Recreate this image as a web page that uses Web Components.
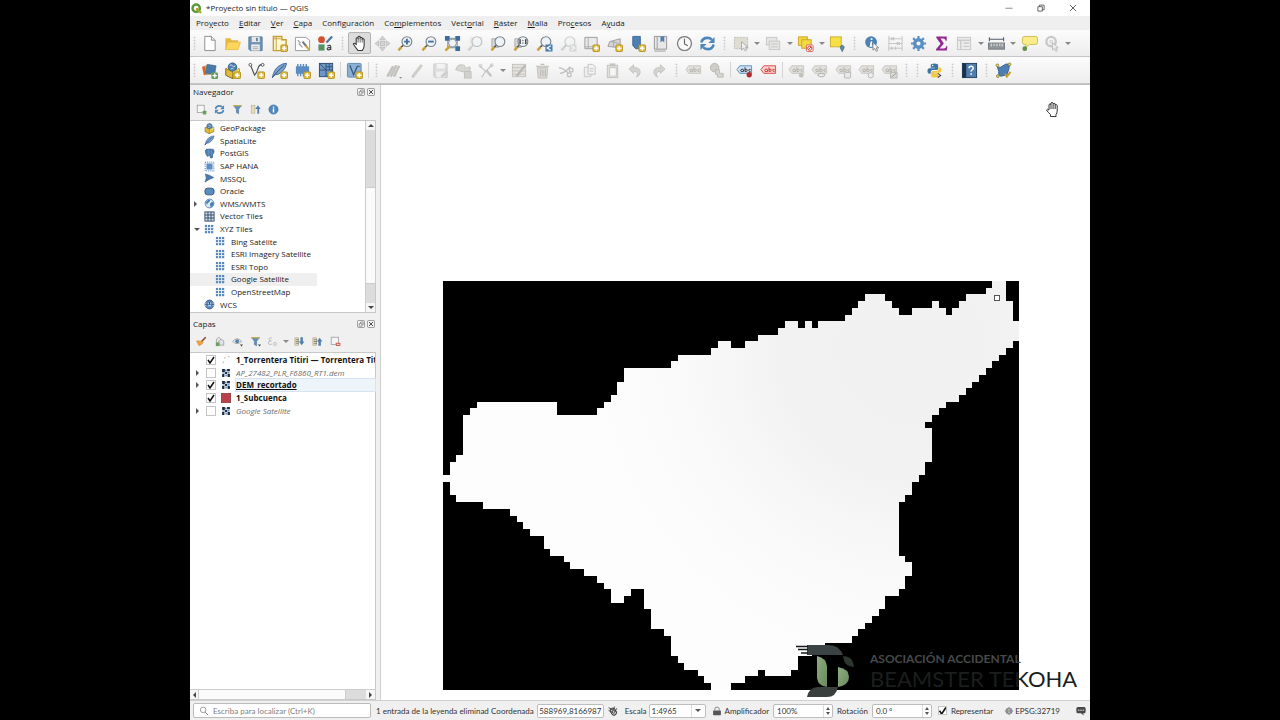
<!DOCTYPE html>
<html lang="es">
<head>
<meta charset="utf-8">
<title>*Proyecto sin título — QGIS</title>
<style>
  html, body { margin: 0; height: 100%; background: #000; }
  body { font: 8px/12px "Open Sans", sans-serif; color: #1a1a1a; overflow: hidden; }
</style>
</head>
<body>
<qgis-window></qgis-window>

<script>
/* ---------- icon set, drawn on an 18 x 18 grid ---------- */
const NEW = '<rect x="10.5" y="10.5" width="7" height="7" rx="1" fill="#e3bd3a" stroke="#b3922a"/><path d="M14 11.6v4.8M11.6 14h4.8" stroke="#fff" stroke-width="1.6"/>';
const PLUS = '<rect x="11" y="11" width="7" height="7" rx="1" fill="#6a9e5c"/><path d="M14.5 12.200v4.600M12.200 14.500h4.600" stroke="#fff" stroke-width="1.400"/>';
const LENS = '<circle cx="10.500" cy="7" r="5.200" fill="#eef3f7" stroke="#7d8286" stroke-width="1.200"/><path d="M6.500 11l-2.300 2.300" stroke="#555" stroke-width="1.600"/><path d="M4.600 12.800L1.500 16.200" stroke="#c9a035" stroke-width="2.600"/>';
const GRID = (n, c, gap) => { let s = ''; const w = 15 / n; for (let i = 0; i < n; i++) for (let j = 0; j < n; j++) s += `<rect x="${1.5 + i * w}" y="${1.5 + j * w}" width="${w - gap}" height="${w - gap}" fill="${c}"/>`; return s; };
const TAG = (f, s, t) => `<path d="M1 8l3-4h12.500v8H4z" fill="${f}" stroke="${s}"/><path d="M5 9.500q0-2 1.500-2t1.500 1v1.500q-2 .800-3-.500M9.500 5.500V10q2.500.500 2.500-1.300T9.500 8M15.500 8q-2-1-2 .800t2 1" fill="none" stroke="${t}" stroke-width="1"/>`;
const GTAG = TAG('#e2e0da', '#c8c6c0', '#b2b0ab');
const FUNNEL = '<path d="M2.500 2.500h13L10.800 8.500v7.500l-3.600-2V8.500z" fill="#5d8fc0" stroke="#51749a"/><path d="M2 1.800h14v2H2z" fill="#d0b04a"/>';
const CHECKER = '<rect x="2" y="2" width="14" height="14" fill="#dfe9f2"/><path d="M2 2h5v5H2zM11 2h5v4h-5zM7 7h4v4H7zM2 11h4v5H2zM12 11h4v5h-4z" fill="#1d2b40"/><path d="M7 3h3v3H7zM3 8h3v2H3zM12 7h3v3h-3zM8 12h3v3H8z" fill="#5f8db5"/>';
const I = {
  logo: '<circle cx="8.500" cy="8.500" r="6" fill="none" stroke="#5c9a36" stroke-width="4"/><path d="M9 9l7.500 7.500" stroke="#93b023" stroke-width="3.600"/><path d="M9 9l2 2" stroke="#ee7913" stroke-width="3"/>',
  file: '<path d="M4 1.500h7l4 4v11H4z" fill="#fff" stroke="#8a8a8a"/><path d="M11 1.500v4h4" fill="#eee" stroke="#8a8a8a"/>',
  open: '<path d="M1.500 15V3.500h5l2 2h6.500V15z" fill="#e3b944"/><path d="M1.500 15.500L4 7.500h13.500L15 15.500z" fill="#fbd65b" stroke="#e0ac3a" stroke-width=".6"/>',
  save: '<path d="M2 2h14v14.500H3.500L2 15z" fill="#6e94b8" stroke="#587892"/><rect x="5" y="2" width="8.500" height="5.500" fill="#e8e8e8"/><rect x="9.500" y="3" width="2" height="3.500" fill="#68829b"/><rect x="4.500" y="10" width="9" height="6.500" fill="#eee"/><path d="M6 12.500h6M6 14.500h6" stroke="#999" stroke-width=".8"/>',
  layout: '<path d="M2.500 1.500h9V5H16v11.500H2.500z" fill="#fff8d8" stroke="#c69e36" stroke-width="1.500"/><path d="M2.500 4h8M5.500 1.500v15" stroke="#c69e36"/>' + NEW,
  manager: '<path d="M1.500 2.500h11l4 3v11h-15z" fill="#fff" stroke="#999"/><path d="M4 5.500l3 3M5 9l4 4" stroke="#999" stroke-width="1.200"/><path d="M9 7l5 6" stroke="#777" stroke-width="2.200"/><path d="M12.500 11.500l3.500 4" stroke="#d2ab3e" stroke-width="2.200"/>',
  style: '<circle cx="4.800" cy="5" r="3.600" fill="#d0502f"/><path d="M10 8l6-6.500" stroke="#51779d" stroke-width="2.400"/><rect x="1.500" y="10" width="6.500" height="6.500" fill="#569163"/><path d="M11 11.500q3.500-1.500 3.500 1V16M14.500 13q-4 0-3.700 1.800T14.500 15" fill="none" stroke="#444" stroke-width="1.300"/>',
  hand: '<path d="M5.500 10V3.500q1-1.400 2 0V2q1.200-1.300 2.200 0v1q1.200-1 2.200.200v1q1.200-.800 2 .500V11q0 3-2 5.500H7.500Q5 13.500 2.500 9.500q.5-1.700 3 .5z" fill="#fff" stroke="#333" stroke-width="1.100"/><path d="M7.500 3.500V8M9.700 3v5M11.900 4v4" stroke="#333" stroke-width=".8"/>',
  pansel: '<g fill="#d3d3d3" stroke="#b4b4b4" stroke-width=".7"><path d="M9 1l3 4H6zM9 17l3-4H6zM1 9l4-3v6zM17 9l-4-3v6z"/><rect x="6.500" y="6.500" width="5" height="5"/></g>',
  zoomin: LENS + '<path d="M7.500 7h6M10.500 4v6" stroke="#456f9f" stroke-width="2"/>',
  zoomout: LENS + '<path d="M7.500 7h6" stroke="#456f9f" stroke-width="2"/>',
  zoomfull: '<path d="M4 3.500h10v10H4z" fill="none" stroke="#6f8fae" stroke-width="1"/><g fill="#3d6c9c"><path d="M1 1h5v5H1zM12 1h5v5h-5zM12 12h5v5h-5z"/></g><circle cx="9" cy="8.500" r="4.200" fill="#eef3f7" stroke="#84898d"/><path d="M6 12l-4.500 4.500" stroke="#c9a035" stroke-width="2.600"/>',
  zoomsel: '<g opacity=".45"><rect x="3" y="2" width="13" height="8" fill="#dcd9cc"/>' + LENS.replace('#c9a035', '#aaa').replace('#555', '#999') + '</g>',
  zoomlayer: '<path d="M2 4h7v9H2z" fill="#d8d8d8" stroke="#aaa"/>' + LENS,
  zoomnative: '<path d="M2 4h7v9H2z" fill="#d8d8d8" stroke="#aaa"/>' + LENS + '<path d="M7.500 4.500v5M13.500 4.500v5" stroke="#333" stroke-width="1.400"/><path d="M10.500 5.500v.900M10.500 8v.900" stroke="#333" stroke-width="1.300"/>',
  zoomlast: LENS + '<rect x="10" y="10" width="7.500" height="7.500" fill="#4f7eae"/><path d="M15.500 11.500l-3.500 2.300 3.500 2.300" fill="none" stroke="#fff" stroke-width="1.300"/>',
  zoomnext: '<g opacity=".35">' + LENS.replace('#c9a035', '#999') + '<rect x="10" y="10" width="7.500" height="7.500" fill="#aaa"/><path d="M12 11.500l3.500 2.300-3.500 2.300" fill="none" stroke="#fff" stroke-width="1.300"/></g>',
  newmap: '<path d="M2 2.500h13v12H2z" fill="#eaeaea" stroke="#9b9b9b"/><path d="M5.500 2.500v12M2 12.500h9" stroke="#aaa"/>' + NEW,
  new3d: '<path d="M2 12l2-5 11-3v8l-5 1z" fill="#d5d5d5" stroke="#9c9c9c"/><path d="M5 7l9 2M8 6v7" stroke="#aaa"/>' + NEW,
  bookmark: '<path d="M4 1.500h8v13H7l-3-3.500z" fill="#4e7fb1" stroke="#3f6c9a"/>' + NEW,
  bookmarks: '<path d="M2.500 1.500h13v13.500h-13z" fill="#e8e8e8" stroke="#949494"/><path d="M5.500 1.500v13.500M2.500 17h12" stroke="#999"/><path d="M9 1.500h4V8l-2-2-2 2z" fill="#4e7fb1"/>',
  clock: '<circle cx="9" cy="9" r="7.400" fill="#f8f8f8" stroke="#777" stroke-width="1.300"/><path d="M9 4v5.500l3.500 2" fill="none" stroke="#666" stroke-width="1.200"/>',
  refresh: '<path d="M2.500 8Q3.500 3 9 3q3 0 4.500 2" fill="none" stroke="#4d86b9" stroke-width="2.800"/><path d="M16.500 2v6.500H10z" fill="#4d86b9"/><path d="M15.500 10Q14.500 15 9 15q-3 0-4.500-2" fill="none" stroke="#4d86b9" stroke-width="2.800"/><path d="M1.500 16V9.500H8z" fill="#4d86b9"/>',
  select: '<rect x="1.500" y="2.500" width="14" height="12" fill="#dfddd2" stroke="#bdbdb8" stroke-dasharray="2 1"/><path d="M9 7v9l2.300-2 1.700 3 1.500-1-1.500-3h3z" fill="#eee" stroke="#aaa"/>',
  select2: '<rect x="1.500" y="2.500" width="11" height="8" fill="#e6e6e2" stroke="#c6c6c6"/><rect x="4.500" y="6.500" width="11" height="9" fill="#e6e6e2" stroke="#c6c6c6"/><path d="M6.500 9.500h7M6.500 12.500h7" stroke="#c6c6c6"/>',
  deselect: '<rect x="1.500" y="2" width="9.500" height="9" fill="#f2d944" stroke="#c9a628"/><rect x="5" y="5" width="10" height="9" fill="#f2d944" stroke="#c9a628"/><rect x="10" y="10.500" width="7" height="7" rx="1" fill="#fff" stroke="#d3645b"/><circle cx="13.500" cy="14" r="2.200" fill="none" stroke="#cc3c32"/><path d="M12 15.500l3-3" stroke="#cc3c32"/>',
  selloc: '<rect x="1.500" y="2" width="11.500" height="10.500" fill="#f7e046" stroke="#cbae31"/><path d="M14 17.500l-2-4q0-2.500 2-2.500t2 2.500z" fill="#628a9f" stroke="#50778b"/>',
  identify: '<circle cx="7.500" cy="7.500" r="6.300" fill="#4b82b6"/><path d="M8 3.500v1.800M8 6.800L7 11.500h2" stroke="#fff" stroke-width="1.800" fill="none"/><path d="M9.500 8v8l2-1.700 1.600 3 1.400-.800-1.500-2.900h2.600z" fill="#fff" stroke="#777" stroke-width=".9"/>',
  abacus: '<g fill="none" stroke="#c2c2c2"><path d="M2 1v16M16 1v16M2 4h14M2 9h14M2 14h14"/><path d="M5 2.500v3M7 2.500v3M11 7.500v3M13 7.500v3M5 12.500v3M9 12.500v3" stroke-width="1.400"/></g>',
  gear: '<circle cx="9" cy="9" r="4" fill="none" stroke="#5a8fc3" stroke-width="3.600"/><path d="M9 1v3M9 14v3M1 9h3M14 9h3M3.300 3.300l2.200 2.200M12.500 12.500l2.200 2.200M3.300 14.700l2.200-2.200M12.500 5.500l2.200-2.200" stroke="#5a8fc3" stroke-width="2.300"/>',
  sigma: '<path d="M3.500 1.500h11V6h-1.200q-.3-2.300-2.500-2.300H8L11.500 9 7 14.200h4.500q2.200 0 2.600-2.400h1.200l-.7 4.700H3.200v-1.300L8 9.300 3.500 2.800z" fill="#93298f"/>',
  table: '<rect x="1.500" y="2.500" width="14" height="13" fill="#ececec" stroke="#c6c6c6"/><path d="M1.500 5.500h14M5 6v9M8 8.500h6M8 12h6" stroke="#cbcbcb" stroke-width="1.500"/>',
  ruler: '<path d="M1 4.500h16M1.500 2.500v4M16.500 2.500v4" stroke="#4f6070" stroke-width="1.200"/><rect x=".500" y="8.500" width="17" height="6.500" fill="#90979c" stroke="#757b80"/><path d="M3.500 9v3M6.500 9v2.500M9.500 9v3M12.500 9v2.500M15 9v3" stroke="#e8e8e8" stroke-width="1"/>',
  note: '<path d="M4 1.500h11q2.500 0 2.500 2V8q0 2-2.500 2H9l-5 4.500 1.500-4.500H4Q1.500 10 1.500 8V3.500q0-2 2.500-2z" fill="#faec8c" stroke="#cdbc54"/><circle cx="4" cy="14.500" r="2.500" fill="#628d4b"/>',
  lens2: '<g stroke="#c8c8c8" fill="none"><circle cx="7.500" cy="7" r="5" stroke-width="2.500"/><circle cx="7.500" cy="7" r="1.500"/></g><path d="M9 8v8l2-1.700 1.600 3 1.400-.800-1.500-2.900h2.600z" fill="#eee" stroke="#bbb"/>',
  source: '<path d="M1 5l8-2 2 9-8 2z" fill="#cf6a32"/><path d="M4 4l9-1 1 9-8 2z" fill="#dba93c"/><path d="M6.500 2.500l9.500 1.500-1.500 9.500L5 12z" fill="#477aa9" stroke="#3b688f" stroke-width=".6"/>' + PLUS,
  gpkg: '<path d="M2 7l7 3.500L16 7v7l-7 3.500L2 14z" fill="#e7c53d" stroke="#6f6228"/><circle cx="9" cy="5.500" r="4.500" fill="#4c7fb0" stroke="#375d82"/><path d="M6 4q2-2 3 0t3 0M7 7.500q2-1.500 3 0" stroke="#d8e6f1" fill="none"/><path d="M2 7l7 3.500 7-3.500v3l-7 3-7-3z" fill="#f2d95c"/><path d="M2 7l7 3.500V17.500L2 14z" fill="#e0bb35" stroke="#6f6228" stroke-width=".6"/>',
  vector: '<path d="M2.500 3l4.500 11q2-2 3.500-7t5-4" fill="none" stroke="#4a4f55" stroke-width="1.200"/><circle cx="2.500" cy="3" r="1.500" fill="#fff" stroke="#555"/><circle cx="15.500" cy="3" r="1.500" fill="#fff" stroke="#555"/>' + NEW,
  feather: '<path d="M1.500 16.500Q3 8 8 4.500t8.500-3Q16 6 12 10t-8 3.500z" fill="#7ba3cb" stroke="#41699a"/><path d="M1.500 16.500Q7 9 14 3.500" stroke="#2f527c" fill="none"/>',
  memory: '<rect x="2" y="4.500" width="14" height="8" fill="#5a8cc0"/><path d="M4 2v13M7 2v13M10 2v13M13 2v13" stroke="#5a8cc0" stroke-width="1.500"/>' + NEW,
  mesh: '<rect x="1.500" y="1.500" width="14" height="14" fill="#6c97c4" stroke="#2f4e70"/><path d="M1.500 8.500h14M8.500 1.500v14M1.500 1.500l7 7M8.500 15.500l7-7M8.500 5h7M12 1.500v7" stroke="#2f4e70" stroke-width=".9"/>' + NEW,
  virtual: '<rect x="1.500" y="1.500" width="14.500" height="14.500" rx="1" fill="#8bb0d5" stroke="#5f8ab4"/><path d="M4 3.500l4 10 4-9h2.500" fill="none" stroke="#33557b" stroke-width="1.300"/>' + NEW,
  pencils: '<g stroke="#c4c2bd" stroke-width="2.600"><path d="M2.500 15.500L8.500 4.500M6 15.500L12 3.500M9.500 15.500L15 4"/></g><path d="M15 16h3l-1.500 1.800z" fill="#888"/>',
  pencil: '<path d="M4 15.500L13.500 3" stroke="#d0cec9" stroke-width="3.200"/><path d="M3 17l1-3 2 1.500z" fill="#bbb"/>',
  savegray: '<g opacity=".4"><path d="M2 2h14v14.500H3.500L2 15z" fill="#bbb" stroke="#888"/><rect x="5" y="2" width="8.500" height="5" fill="#eee"/><rect x="4.500" y="10" width="9" height="6.500" fill="#eee"/><path d="M10 16l6-6" stroke="#999" stroke-width="3"/></g>',
  addfeat: '<path d="M1.500 8q0-5 5-5t4 2.500 5-.500q2 2-.5 4.500T5 9.500t-3.500-1.500z" fill="#d9d7d2" stroke="#c6c4bf"/><rect x="10" y="10" width="7" height="7" fill="#d3d1cb" stroke="#c0c0c0"/>',
  vertex: '<g fill="none" stroke="#c2c2c2"><path d="M2 4l6 6L15 3M8 10l-4 6" stroke-width="1.200"/><circle cx="2.500" cy="4" r="1.500"/><circle cx="14.500" cy="3.500" r="1.500"/></g><path d="M9 9l5 6" stroke="#c4c4c4" stroke-width="2.600"/>',
  attrs: '<rect x="1.500" y="2.500" width="14" height="13" fill="#e4e2dc" stroke="#c4c2bc"/><path d="M2 6h13M2 9.500h13M2 13h13" stroke="#c4c2bc"/><path d="M6 15L15 3.500" stroke="#b8b6b0" stroke-width="2.200"/>',
  trash: '<path d="M3.500 6h11l-1 11h-9z" fill="#dcdad4" stroke="#bebcb6"/><path d="M2 4.500h14M7 2.500h4M7 8v7M9.500 8v7M12 8v7" stroke="#bebcb6" stroke-width="1.300"/>',
  cut: '<g fill="none" stroke="#c0c0c0" stroke-width="1.400"><path d="M2 6q6 1 10 6M3 12q5 0 11-7"/><circle cx="13" cy="13.500" r="2"/><circle cx="15" cy="8.500" r="2"/></g>',
  copy: '<path d="M3.500 5.500h7v10h-7z" fill="#eee" stroke="#c8c8c8"/><path d="M7.500 2.500h5l2.500 2.500v8H7.500z" fill="#f3f3f3" stroke="#c2c2c2"/><path d="M9 7h4M9 9.500h4" stroke="#c4c4c4"/>',
  paste: '<rect x="3.500" y="3.500" width="11" height="13" fill="#e3e1dc" stroke="#c0c0c0"/><rect x="6" y="1.500" width="6" height="3" fill="#c4c4c4"/><rect x="6" y="6" width="7" height="9" fill="#f6f6f6" stroke="#c8c8c8"/>',
  undo: '<path d="M2 7.500L7 3v2.800q7-.3 7 5.200 0 3-4 5 1.500-2 1-4-.7-2.200-4-2.200V12z" fill="#d5d3cf" stroke="#bdbdbd" stroke-width=".8"/>',
  redo: '<path d="M16 7.500L11 3v2.800q-7-.3-7 5.200 0 3 4 5-1.500-2-1-4 .7-2.200 4-2.200V12z" fill="#d5d3cf" stroke="#bdbdbd" stroke-width=".8"/>',
  tag: GTAG,
  diagram: '<circle cx="7" cy="6" r="4.500" fill="#cfcdc8" stroke="#b9b7b1"/><path d="M8 8h4v4h4v4h-6v-3H8z" fill="#d9d7d2" stroke="#b9b7b1"/>',
  tagpin: TAG('#cfe1f3', '#5b8fc5', '#333') + '<circle cx="14" cy="13.500" r="2.800" fill="#b3282c"/>',
  tagred: TAG('#fbd3d1', '#dd4842', '#c8322c'),
  tag1: GTAG + '<circle cx="14" cy="14" r="2.500" fill="#c2c0bb"/>',
  tag2: GTAG + '<path d="M7 14q4-4 8 0-4 3.500-8 0z" fill="#eee" stroke="#aaa"/>',
  tag3: GTAG + '<rect x="10" y="11" width="6.500" height="6" rx="1" fill="#e8e8e8" stroke="#b5b5b5"/>',
  tag4: GTAG + '<circle cx="13.500" cy="14" r="2.800" fill="#eee" stroke="#b5b5b5"/>',
  tag5: GTAG + '<path d="M10 11h7v6h-7z" fill="#dcdad4" stroke="#b5b5b5"/><path d="M11 16l5-4" stroke="#999"/>',
  python: '<path d="M9 1.500q-4 0-4 2V6h4.500v.700H3.500Q1.500 7 1.500 9.500t2 3H5v-2q0-2 2-2h4q1.800 0 1.800-1.700V3.500q0-2-3.800-2z" fill="#3b74a6"/><path d="M9 16.500q4 0 4-2V12H8.500v-.700h6q2-.3 2-2.800t-2-3h-1.300v2q0 2-2 2h-4q-1.800 0-1.800 1.700v3.300q0 2 3.600 2z" fill="#f0c940"/><circle cx="7" cy="3.800" r=".8" fill="#fff"/><path d="M12.500 12l3 2.200-3 2.200" stroke="#444" fill="none" stroke-width="1.200"/>',
  help: '<rect x="1.500" y="1.500" width="15" height="15" fill="#4e7dae" stroke="#26415e"/><rect x="1.500" y="1.500" width="4" height="15" fill="#1c3047"/><path d="M8.500 6.500q0-2 2.200-2t2.200 2q0 1.200-1.200 2t-1 1.800M10.700 12v1.800" fill="none" stroke="#fff" stroke-width="1.500"/>',
  topo: '<path d="M2.500 5q3 2 6-1t7-1.500L14.500 8l-2 5.500-6.500 1.500q-3-1-2-5z" fill="#4e7fb2" stroke="#345d88"/><g fill="#e8d98c" stroke="#8a8333"><circle cx="2.500" cy="3.500" r="1.400"/><circle cx="15.500" cy="2.500" r="1.400"/><circle cx="3" cy="15" r="1.400"/></g><path d="M10.500 12.500l2 3 4-5" fill="none" stroke="#c99a2c" stroke-width="2"/>',
  addsel: '<rect x="2" y="2" width="11.500" height="12" fill="#f6f6f6" stroke="#9c9c9c" stroke-width="1.300"/><rect x="11" y="11" width="6" height="6" rx="1" fill="#6d9f60"/>',
  funnel: FUNNEL,
  collapse: '<rect x="2" y="2" width="6" height="13" fill="#e6ddbf" stroke="#b7ab85"/><path d="M12 16V8H8.500L13 2l4.500 6H15v8z" fill="#4d7fb3"/>',
  info: '<circle cx="9" cy="9" r="7.500" fill="#5087bd" stroke="#3c6c9d"/><path d="M9 4v2M9 7.500V14" stroke="#fff" stroke-width="2.400"/>',
  brush: '<path d="M9 9l7-7" stroke="#8a4b26" stroke-width="2.600"/><path d="M1 8l8 .500 3 2Q9 14 5 16z" fill="#f0a53c" stroke="#d27f2a"/>',
  group: '<path d="M4 14V5l4-3 3 3v9z" fill="#e7e7e7" stroke="#888"/><path d="M8 15V8l4-3 4 3v7z" fill="#dfe3e6" stroke="#888"/><rect x="3" y="10.500" width="6" height="6" fill="#6d9f60"/>',
  eye: '<path d="M1 9q7-9 15 0-8 7-15 0z" fill="#e4e9ee" stroke="#888"/><circle cx="8.500" cy="8.500" r="3.200" fill="#5c83aa"/><path d="M13 14h5l-2.500 3z" fill="#444"/>',
  funnel2: FUNNEL + '<path d="M13 14h5l-2.500 3z" fill="#444"/>',
  expr: '<g fill="none" stroke="#bbb" stroke-width="1.500"><path d="M8 3.500Q3 2 3 5t4 3Q2 8 2 11.500t6 2"/><circle cx="13" cy="13" r="2.500"/></g>',
  expand: '<rect x="1.500" y="3" width="6" height="12" fill="#e6ddbf" stroke="#aa9f7c"/><path d="M3 6h5M3 9h5M3 12h5" stroke="#555"/><path d="M10.500 2v7H8l4.500 6L17 9h-2.500V2z" fill="#4d7fb3"/>',
  collapse2: '<rect x="1.500" y="3" width="6" height="12" fill="#e6ddbf" stroke="#aa9f7c"/><path d="M3 6h5M3 9h5M3 12h5" stroke="#555"/><path d="M10.500 16V9H8l4.500-6L17 9h-2.500v7z" fill="#4d7fb3"/>',
  remove: '<rect x="2" y="2" width="12" height="12" fill="#f4f4f4" stroke="#9c9c9c" stroke-width="1.300"/><rect x="9.500" y="11" width="7.500" height="5.500" rx="1" fill="#d4625a"/><path d="M11 13.700h4.500" stroke="#fff" stroke-width="1.300"/>',
  pg: '<path d="M2 4q2-3 5-2 3-1 5 0 4-1 4.500 3 0 4-2.500 6v4.500q-2 2-4 0V12H8q-1 3-3 1-3-4-3-9z" fill="#4f80b3" stroke="#33597f"/><path d="M7 3q2 4 0 8M12 4v6" stroke="#7fa5c9" fill="none"/>',
  hana: '<rect x="4" y="4" width="10" height="10" fill="#5e8fc1"/><rect x="2" y="2" width="14" height="14" fill="none" stroke="#6a98c6" stroke-width="2" stroke-dasharray="1.500 1.500"/>',
  mssql: '<path d="M2 1.500q8 2 14 6Q8 10 1.500 15q4-7 .5-13.500z" fill="#4a7aad" stroke="#38618c"/>',
  oracle: '<rect x="1.500" y="3.500" width="15" height="11" rx="4.500" fill="#5b8cc0" stroke="#2b4a6b" stroke-width="1.400"/>',
  globe: '<circle cx="9" cy="9" r="7.200" fill="#dfeaf5" stroke="#3f6fa0" stroke-width="1.300"/><path d="M3 7q3-5 6-4t-1 4-3 5zM10 9q4-4 6-1-1 6-5 7-2-3-1-6z" fill="#4b7fb4"/>',
  wcs: '<circle cx="9" cy="9" r="7.200" fill="#5788bb" stroke="#2f557e" stroke-width="1.300"/><path d="M2 7h14M2 11h14" stroke="#dfe9f3" stroke-width="1.400"/><path d="M5 6v6M9 5v4M13 6v6" stroke="#27486b" stroke-width="1.500"/>',
  vtiles: '<rect x="1.500" y="1.500" width="15" height="15" fill="#d6e2ee" stroke="#2c4765" stroke-width="1.500"/><path d="M6.500 1.500v15M11.500 1.500v15M1.500 6.500h15M1.500 11.500h15" stroke="#2c4765" stroke-width="1.500"/>',
  xyz: GRID(3, '#5688bd', 1.400) + '<path d="M1 6h16M1 11h16" stroke="#c6d7e8" stroke-width=".6"/>',
  checker: CHECKER,
  points: '<g fill="#c59d9d"><circle cx="4" cy="13" r="1.200"/><circle cx="7" cy="5" r="1.200"/><circle cx="14" cy="3" r="1.200"/></g>',
  fillred: '<rect x=".5" y=".5" width="17" height="17" fill="#b8414a" stroke="#7d2b32"/>',
  search: '<circle cx="7.500" cy="7" r="5" fill="none" stroke="#777" stroke-width="1.300"/><path d="M11 11l5.500 5.500" stroke="#777" stroke-width="1.600"/>',
  mouse: '<rect x="5" y="4" width="9" height="13" rx="4.500" transform="rotate(-30 9 10)" fill="#ccc" stroke="#444" stroke-width="1.800"/><path d="M1 3l14 7M1 8l8 4M12 1l-5 11M16 4l-6 10" stroke="#444" stroke-width="1.600"/>',
  lock: '<path d="M5 8V5.500q0-3.500 4-3.500t4 3.500V8" fill="none" stroke="#8a8a8a" stroke-width="1.800"/><rect x="2" y="8" width="14" height="8.500" rx="1" fill="#555"/>',
  crs: '<path d="M9 1.500L17 9l-8 7.500L1 9z" fill="#999"/><circle cx="9" cy="9" r="6" fill="#777"/><path d="M2 9h14M9 2v14M4.500 5q4.500 3 9 0M4.500 13q4.500-3 9 0" stroke="#ddd" fill="none" stroke-width=".9"/>',
  chat: '<path d="M3 2h12q2.500 0 2.500 5.500T15 13h-2l1 4-5-4H3Q.5 13 .5 7.500T3 2z" fill="#484848"/><g fill="#fff"><circle cx="5" cy="7.500" r="1.200"/><circle cx="9" cy="7.500" r="1.200"/><circle cx="13" cy="7.500" r="1.200"/></g>',
  min: '<path d="M1 9.500h16" stroke="#555" stroke-width="1.500"/>',
  restore: '<path d="M2 6h10v10H2z M5.500 5.500V2.500h10.500v10.500h-3.500" fill="none" stroke="#444" stroke-width="1.800"/>',
  close: '<path d="M2 2l14 14M16 2L2 16" stroke="#444" stroke-width="1.900"/>',
  float: '<rect x="1" y="1" width="16" height="16" rx="3" fill="#f5f5f5" stroke="#777" stroke-width="1.600"/><path d="M5 8h6v6H5zM8 7V4.500h6V11h-2.500" fill="none" stroke="#666" stroke-width="1.400"/>',
  shut: '<rect x="1" y="1" width="16" height="16" rx="3" fill="#f5f5f5" stroke="#777" stroke-width="1.600"/><path d="M4.500 4.500l9 9M13.500 4.500l-9 9" stroke="#444" stroke-width="2.200"/>'
};
I.gpkgnew = I.gpkg + NEW;
I.feathernew = I.feather + NEW;

const define = (name, html) => customElements.define(name, class extends HTMLElement {
  connectedCallback() {
    if (this.shadowRoot) return;
    const t = document.createElement('template');
    t.innerHTML = typeof html === 'function' ? html(this) : html;
    this.attachShadow({ mode: 'open' }).append(t.content.cloneNode(true));
  }
});

define('q-icon', el => `<style>:host{display:block;flex:none;width:var(--icon,17px);height:var(--icon,17px)}svg{display:block;width:100%;height:100%}</style>
<svg viewBox="0 0 18 18" aria-hidden="true">${I[el.getAttribute('name')]}</svg>`);

/* toolbar button; "menu" adds a drop-down arrow */
define('q-tool', el => `<style>
:host{display:flex;align-items:center;flex:1 1 0;min-width:0}
:host([menu]){flex:1 1 9px}
button{all:unset;box-sizing:border-box;flex:1 1 0;min-width:0;height:22px;display:grid;place-items:center;border-radius:2px}
:host([on]) button{background:#dcdcdc;border:1px solid #b4b4b4}
i{flex:none;width:9px;height:4px;display:grid;place-items:center}
i::after{content:"";border:3px solid transparent;border-top-color:#888;border-bottom:0}
</style><button aria-label="${el.getAttribute('label') || el.getAttribute('name')}"><q-icon name="${el.getAttribute('name')}"></q-icon></button>${el.hasAttribute('menu') ? '<i></i>' : ''}`);

define('q-grip', `<style>:host{display:grid;place-items:center;flex:none;width:11px}:host(:first-child){width:8px}
i{width:3px;height:14px;background:radial-gradient(circle,#ccc 30%,transparent 60%) 0 0/3px 3px}</style><i></i>`);
define('q-sep', `<style>:host{display:grid;place-items:center;flex:none;width:5px}i{width:1px;height:16px;background:#d4d4d4}</style><i></i>`);

define('q-toolbar', `<style>:host{display:flex;height:27px;box-sizing:border-box;background:linear-gradient(#fcfcfc,#ededed);border-bottom:1px solid #c6c6c6}</style><slot></slot>`);

define('q-titlebar', `<style>:host{display:flex;align-items:center;height:16px;background:#fff;padding:0 13px 0 1px;gap:4px}
h1{font:inherit;margin:0;flex:1}.b{display:flex;gap:24px}button{all:unset;width:8px}q-icon{--icon:8px}.logo{--icon:11px}</style>
<q-icon class="logo" name="logo"></q-icon><h1><slot></slot></h1>
<div class="b"><button aria-label="Minimizar"><q-icon name="min"></q-icon></button><button aria-label="Restaurar"><q-icon name="restore"></q-icon></button><button aria-label="Cerrar"><q-icon name="close"></q-icon></button></div>`);

define('q-menubar', `<style>:host{display:flex;align-items:center;height:14px;background:#efefef;padding-left:6px;gap:10px}::slotted(button){all:unset;white-space:nowrap}</style><slot></slot>`);

/* docked panel: heading, tool strip, body */
define('q-dock', el => `<style>
:host{display:flex;flex-direction:column;min-width:0;min-height:0}
header{display:flex;align-items:center;height:14px;padding:0 1px 0 3px;gap:2px}
h2{font:inherit;margin:0;flex:1}header button{all:unset}header q-icon{--icon:8px}
.tools{display:flex;align-items:center;height:21px;padding-left:2px;--icon:11px}
.body{flex:1;min-height:0;background:#fff;border:1px solid #c8c8c8;border-left:0;display:flex;flex-direction:column}
</style><header><h2>${el.getAttribute('heading')}</h2><button aria-label="Flotar"><q-icon name="float"></q-icon></button><button aria-label="Cerrar panel"><q-icon name="shut"></q-icon></button></header>
<div class="tools"><slot name="tools"></slot></div><div class="body"><slot></slot></div>`);

/* decorated scrollbar; --a, --b, --c share the track before, on and after the thumb */
define('q-scroll', el => { const h = el.hasAttribute('horizontal'); return `<style>
:host{display:flex;flex-direction:${h ? 'row' : 'column'};flex:none;${h ? 'height' : 'width'}:10px;background:#dcdcdc;border-${h ? 'top' : 'left'}:1px solid #ccc;box-sizing:border-box}
b{flex:none;${h ? 'width' : 'height'}:9px;background:#f6f6f6;display:grid;place-items:center}
b::after{content:"";border:3px solid transparent}
.start::after{border-${h ? 'right' : 'bottom'}-color:#444;border-${h ? 'left' : 'top'}:0}
.end::after{border-${h ? 'left' : 'top'}-color:#444;border-${h ? 'right' : 'bottom'}:0}
i{flex:var(--a) 0 0}u{flex:var(--b) 0 0;background:#fbfbfb;outline:1px solid #ccc}s{flex:var(--c) 0 0}
</style><b class="start"></b><i></i><u></u><s></s><b class="end"></b>`; });

define('q-node', el => `<style>
:host{display:flex;align-items:center;flex:1 1 0;min-height:0;padding-left:2px;margin-right:48px;white-space:nowrap;--icon:11px}
:host([selected]){background:#efefef}
.a{flex:none;width:${el.hasAttribute('child') ? 23 : 12}px;height:8px;display:grid;place-items:center start;padding-left:2px;box-sizing:border-box}
.a.closed::after{content:"";border:3px solid transparent;border-left:3px solid #555;border-right:0}
.a.open::after{content:"";border:3px solid transparent;border-top:3px solid #555;border-bottom:0}
q-icon{margin-right:5px}
</style><span class="a ${el.getAttribute('arrow') || ''}"></span><q-icon name="${el.getAttribute('icon')}"></q-icon><slot></slot>`);

define('q-layer', el => `<style>
:host{display:flex;align-items:center;flex:1 1 0;min-height:0;gap:5px;padding-left:3px;white-space:nowrap;--icon:10px}
.a{flex:none;width:8px;height:8px;display:grid;place-items:center}
.a.closed::after{content:"";border:3px solid transparent;border-left:3px solid #555;border-right:0}
input{appearance:none;flex:none;width:10px;height:10px;margin:0;border:1px solid #c4c4c4;background:#fff}
input:checked{background:#fff url("data:image/svg+xml,%3Csvg xmlns='http://www.w3.org/2000/svg' viewBox='0 0 8 8'%3E%3Cpath d='M1 4l2 3 4-6' fill='none' stroke='%23111' stroke-width='1.500'/%3E%3C/svg%3E") center/8px no-repeat}
label{display:block;flex:1;min-width:0;overflow:hidden;line-height:12px}
:host([shown]) label{font-weight:700;color:#111}
:host([dim]) label{font-style:italic;color:#6c6c6c}
:host([current]) label{text-decoration:underline;background:#edf4fa;outline:1px solid #d5e4f0}
</style><span class="a ${el.getAttribute('arrow') || ''}"></span><input type="checkbox" id="c" ${el.hasAttribute('shown') ? 'checked' : ''}><q-icon name="${el.getAttribute('icon')}"></q-icon><label for="c"><slot></slot></label>`);

define('q-browser', `<style>
:host{display:block;min-width:0}
q-dock{height:100%}
.wrap{flex:1;display:flex;min-height:0}
.tree{flex:1;display:flex;flex-direction:column;padding:1px 0;min-width:0;overflow:hidden}
q-tool{flex:0 0 18px}
q-scroll{--a:58;--b:96;--c:20}
</style><q-dock heading="Navegador">
<q-tool slot="tools" name="addsel" label="Añadir capas"></q-tool><q-tool slot="tools" name="refresh" label="Actualizar"></q-tool><q-tool slot="tools" name="funnel" label="Filtrar"></q-tool><q-tool slot="tools" name="collapse" label="Comprimir todo"></q-tool><q-tool slot="tools" name="info" label="Propiedades"></q-tool>
<div class="wrap"><div class="tree">
<q-node icon="gpkg">GeoPackage</q-node><q-node icon="feather">SpatiaLite</q-node><q-node icon="pg">PostGIS</q-node><q-node icon="hana">SAP HANA</q-node><q-node icon="mssql">MSSQL</q-node><q-node icon="oracle">Oracle</q-node>
<q-node icon="globe" arrow="closed">WMS/WMTS</q-node><q-node icon="vtiles">Vector Tiles</q-node><q-node icon="xyz" arrow="open">XYZ Tiles</q-node>
<q-node icon="xyz" child>Bing Satélite</q-node><q-node icon="xyz" child>ESRI Imagery Satellite</q-node><q-node icon="xyz" child>ESRI Topo</q-node><q-node icon="xyz" child selected>Google Satellite</q-node><q-node icon="xyz" child>OpenStreetMap</q-node>
<q-node icon="wcs">WCS</q-node>
</div><q-scroll></q-scroll></div></q-dock>`);

define('q-layers', `<style>
:host{display:block;min-width:0}
q-dock{height:100%}
.list{display:flex;flex-direction:column;height:63px;padding-top:1px}
.rest{flex:1}
q-tool{flex:0 0 18px}q-tool[menu]{flex:0 0 26px}
q-scroll{--a:0;--b:143;--c:21}
</style><q-dock heading="Capas">
<q-tool slot="tools" name="brush" label="Estilo"></q-tool><q-tool slot="tools" name="group" label="Añadir grupo"></q-tool><q-tool slot="tools" name="eye" label="Temas"></q-tool><q-tool slot="tools" name="funnel2" label="Filtrar leyenda"></q-tool><q-tool slot="tools" name="expr" label="Filtrar por expresión" menu></q-tool><q-tool slot="tools" name="expand" label="Expandir"></q-tool><q-tool slot="tools" name="collapse2" label="Comprimir"></q-tool><q-tool slot="tools" name="remove" label="Eliminar"></q-tool>
<div class="list">
<q-layer icon="points" shown>1_Torrentera Titiri — Torrentera Titiri</q-layer>
<q-layer icon="checker" dim arrow="closed">AP_27482_PLR_F6860_RT1.dem</q-layer>
<q-layer icon="checker" shown current arrow="closed">DEM_recortado</q-layer>
<q-layer icon="fillred" shown>1_Subcuenca</q-layer>
<q-layer icon="checker" dim arrow="closed">Google Satellite</q-layer>
</div><div class="rest"></div><q-scroll horizontal></q-scroll></q-dock>`);

/* map canvas; the raster is traced on its own 86 x 61 cell grid */
define('q-map', `<style>
:host{display:block;position:relative;background:#fff;border-left:1px solid #cfcfcf;overflow:hidden}
svg{display:block;width:100%;height:100%}
.brand{position:absolute;right:8px;bottom:8px;width:212px;color:#1b1e1e}
p{margin:0;white-space:nowrap}
.small{font:700 12px/15px Lato,sans-serif;color:#464a4a}
.big{font:400 22px/26px Lato,sans-serif}
</style>
<svg viewBox="0 0 709 615" preserveAspectRatio="xMaxYMax meet" role="img" aria-label="Mapa">
<defs><radialGradient id="g" gradientUnits="userSpaceOnUse" cx="70" cy="10" r="52"><stop offset="0" stop-color="#f1f1f1"/><stop offset=".38" stop-color="#f2f2f2"/><stop offset=".55" stop-color="#f7f7f7"/><stop offset=".75" stop-color="#fbfbfb"/><stop offset="1" stop-color="#fdfdfd"/></radialGradient>
<linearGradient id="s" x1="0" y1="0" x2="1" y2="1"><stop offset="0" stop-color="#8fae80"/><stop offset="1" stop-color="#688a5e"/></linearGradient></defs>
<g transform="translate(62 196) scale(6.7)" shape-rendering="crispEdges">
<rect width="86" height="61" fill="#000"/>
<path fill="url(#g)" d="M0 29H1V27H2V26H3V20H4V19H5V18H17V20H23V19H24V18H25V17H26V15H27V13H34V12H35V11H40V10H41V9H43V10H45V9H47V8H50V7H51V6H53V7H54V6H55V7H56V6H60V5H61V4H62V3H63V2H66V3H67V4H68V5H70V4H73V3H74V4H75V5H76V4H77V3H78V2H81V1H82V0H84V3H85V6H86V9H85V10H84V11H83V12H82V13H81V14H80V15H79V16H78V17H77V18H75V19H74V20H73V21H72V22H73V27H72V29H71V30H70V32H69V33H68V41H69V42H70V44H69V46H68V47H66V49H65V50H64V51H63V52H62V53H61V54H57V55H55V56H53V58H52V59H48V58H47V59H45V60H43V61H40V60H39V59H38V58H36V57H35V56H34V53H33V52H31V49H30V46H28V47H27V48H25V46H24V45H23V44H21V43H19V42H18V41H16V40H15V38H13V37H12V36H11V35H10V34H6V33H2V32H1V30H0Z"/></g>
<rect x="613.500" y="210.500" width="5" height="5" fill="#fff" stroke="#555"/>
<g transform="translate(664 16)" fill="#fff" stroke="#333" stroke-width="1"><path d="M4 9V3.500q1-1.200 2 0V2q1.100-1.200 2.100 0v.800q1.100-1 2.100 0v1q1.200-.800 2 .400V10q0 2-1.200 3.500v2H5.500v-2Q3 11.500 1.500 9q.5-1.500 2.500 0z"/><path d="M6 3.500V8M8.100 3v5M10.200 3.500V8" fill="none"/></g>
<g><path d="M426 560h22q10 0 14 10h-36z" fill="#3b4344"/><path d="M415 561.500h12M417 564.500h10M420 568h7" stroke="#151818" stroke-width="1.600"/>
<path d="M436 571q9 2 10 10v21q-9-1-10-9z" fill="url(#s)"/><path d="M457 582q11 2 11 10t-11 10z" fill="url(#s)"/><path d="M462 571q10 0 11 11-10 0-11-11z" fill="#2f3830"/><path d="M426 612q2-10 11-10h20q-2 10-11 10z" fill="#383f3d"/></g>
</svg>
<div class="brand"><p class="small">ASOCIACIÓN ACCIDENTAL</p><p class="big">BEAMSTER TEKOHA</p></div>`);

define('q-spin', el => `<style>
:host{display:flex;height:14px;box-sizing:border-box;border:1px solid #bdbdbd;border-radius:2px;background:#fff}
input{all:unset;flex:1;min-width:0;padding-left:3px}
div{display:flex;flex-direction:column;justify-content:center;gap:2px;width:8px;border-left:1px solid #ddd}
button{all:unset;display:grid;place-items:center}
button::after{content:"";border:2px solid transparent}
button:first-child::after{border-top:0;border-bottom:3px solid #555}button:last-child::after{border-bottom:0;border-top:3px solid #555}
</style><input value="${el.getAttribute('value')}" aria-label="${el.getAttribute('label')}"><div><button aria-label="Más"></button><button aria-label="Menos"></button></div>`);

define('q-status', `<style>
:host{display:flex;align-items:center;height:20px;background:#f0f0f0;border-top:1px solid #d0d0d0;box-sizing:border-box;font-family:Lato,sans-serif;padding:0 4px 0 3px;white-space:nowrap;color:#333;--icon:10px}
.find{display:flex;align-items:center;gap:4px;box-sizing:border-box;width:178px;height:15px;border:1px solid #bbb;border-radius:2px;background:#fff;padding:0 5px;margin-right:5px}
input[type=text]{all:unset;min-width:0;flex:1}input::placeholder{color:#808080}
.msg{flex:1 1 0;min-width:0}
.coord{display:flex;align-items:center;gap:3px;margin-right:4px}
.coord input{box-sizing:border-box;flex:none;width:67px;height:14px;border:1px solid #bdbdbd;border-radius:2px;background:#fff;text-align:center}
select{appearance:none;width:57px;height:14px;margin:0 6px 0 2px;padding:0 2px;border:1px solid #bdbdbd;border-radius:2px;font:inherit;color:inherit;background:linear-gradient(#ddd,#ddd) right 13px top/1px 100% no-repeat,url("data:image/svg+xml,%3Csvg xmlns='http://www.w3.org/2000/svg' viewBox='0 0 6 4'%3E%3Cpath d='M0 0h6L3 3z' fill='%23555'/%3E%3C/svg%3E") right 4px center/6px 4px no-repeat #fff}
.lbl{margin-left:7px}.amp{margin-left:3px}q-spin{width:60px;margin:0 4px}
.chk{appearance:none;width:9px;height:9px;margin:0 4px 0 2px;border:1px solid #c4c4c4;background:#fff url("data:image/svg+xml,%3Csvg xmlns='http://www.w3.org/2000/svg' viewBox='0 0 8 8'%3E%3Cpath d='M1 4l2 3 4-6' fill='none' stroke='%23111' stroke-width='1.500'/%3E%3C/svg%3E") center/8px no-repeat}
button{all:unset;display:flex;align-items:center;gap:1px}.crs{margin:0 16px 0 11px}
</style>
<label class="find"><q-icon name="search"></q-icon><input type="text" placeholder="Escriba para localizar (Ctrl+K)"></label>
<span class="msg">1 entrada de la leyenda eliminad</span>
<label class="coord">Coordenada <input type="text" value="588969,8166987"></label>
<q-icon name="mouse"></q-icon>
<label class="lbl" for="e">Escala</label><select id="e"><option>1:4965</option></select>
<q-icon name="lock"></q-icon><span class="amp">Amplificador</span><q-spin value="100%" label="Amplificador"></q-spin>
<span>Rotación</span><q-spin value="0.0 °" label="Rotación"></q-spin>
<input class="chk" type="checkbox" id="r" checked><label for="r">Representar</label>
<button class="crs"><q-icon name="crs"></q-icon>EPSG:32719</button><button aria-label="Mensajes"><q-icon name="chat"></q-icon></button>`);

const tools = s => s.trim().split(/\s+/).map(n => n === '|' ? '<q-grip></q-grip>' : n === '/' ? '<q-sep></q-sep>' :
  n.endsWith('+') ? `<q-tool name="${n.slice(0, -1)}" menu></q-tool>` : n.endsWith('!') ? `<q-tool name="${n.slice(0, -1)}" on></q-tool>` : `<q-tool name="${n}"></q-tool>`).join('');

define('qgis-window', `<style>
:host{display:grid;grid-template-columns:minmax(0,1fr);grid-template-rows:auto auto auto auto minmax(0,1fr) auto;height:100vh;min-width:0;max-width:100vw;aspect-ratio:5/4;margin:0 auto;background:#f0f0f0}
main{display:grid;grid-template-columns:186px minmax(0,1fr);gap:4px;min-height:0;border-top:1px solid #bcbcbc}
aside{display:grid;grid-template-columns:minmax(0,1fr);grid-template-rows:228px minmax(0,1fr);gap:4px;min-height:0}
.one{padding-right:17px}.two{padding-right:75px}
</style>
<q-titlebar>*Proyecto sin título — QGIS</q-titlebar>
<q-menubar><button>Pro<u>y</u>ecto</button><button><u>E</u>ditar</button><button><u>V</u>er</button><button><u>C</u>apa</button><button>Confi<u>g</u>uración</button><button>Co<u>m</u>plementos</button><button>Vect<u>o</u>rial</button><button><u>R</u>áster</button><button><u>M</u>alla</button><button>Pro<u>c</u>esos</button><button>A<u>y</u>uda</button></q-menubar>
<q-toolbar class="one">${tools('| file open save layout manager style | hand! pansel zoomin zoomout zoomfull zoomsel zoomlayer zoomnative zoomlast zoomnext newmap new3d bookmark bookmarks clock refresh | select+ select2+ deselect+ selloc | identify abacus gear sigma table+ ruler+ note lens2+')}</q-toolbar>
<q-toolbar class="two">${tools('| source gpkgnew vector feathernew memory mesh / virtual / | pencils pencil savegray addfeat vertex+ attrs trash cut copy paste undo redo | tag diagram / tagpin tagred / tag1 tag2 tag3 tag4 tag5 | | python | help | topo')}</q-toolbar>
<main><aside><q-browser></q-browser><q-layers></q-layers></aside><q-map></q-map></main>
<q-status></q-status>`);
</script>
</body>
</html>
